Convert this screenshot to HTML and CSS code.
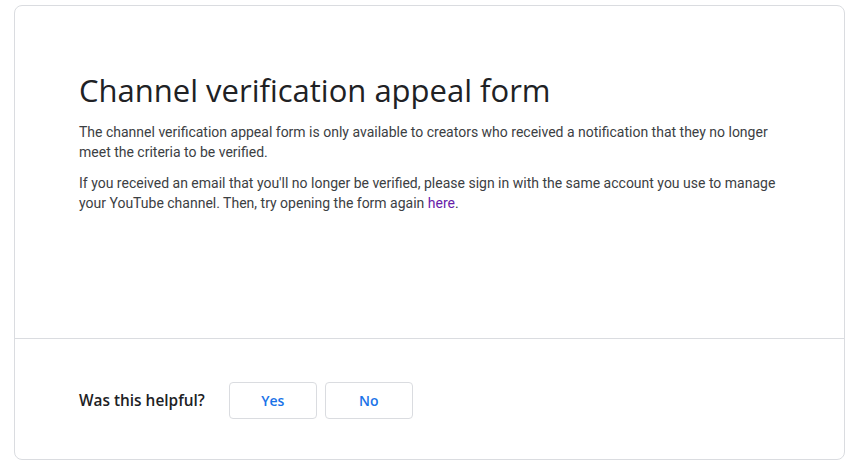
FILE: index.html
```html
<!DOCTYPE html>
<html lang="en">
<head>
<meta charset="utf-8">
<title>Channel verification appeal form</title>
<link rel="stylesheet" href="styles.css">
</head>
<body>
<div class="card">
  <section class="content">
    <h1 class="title">Channel verification appeal form</h1>
    <p class="text">The channel verification appeal form is only available to creators who received a notification that they no longer meet the criteria to be verified.</p>
    <p class="text">If you received an email that you'll no longer be verified, please sign in with the same account you use to manage your YouTube channel. Then, try opening the form again <a class="link" href="#">here</a>.</p>
  </section>
  <section class="feedback">
    <span class="question">Was this helpful?</span>
    <div class="buttons">
      <button class="btn">Yes</button>
      <button class="btn">No</button>
    </div>
  </section>
</div>
</body>
</html>
```
FILE: styles.css
```css
html, body {
  margin: 0;
  padding: 0;
  background: #fff;
}
body {
  padding: 5px 14px 0 14px;
}
.card {
  width: 831px;
  height: 455px;
  box-sizing: border-box;
  border: 1px solid #dadce0;
  border-radius: 8px;
  display: flex;
  flex-direction: column;
}
.content {
  height: 333px;
  box-sizing: border-box;
  padding: 64px 64px 0 64px;
  border-bottom: 1px solid #dadce0;
}
.title {
  margin: 0 0 12px 0;
  font-family: "Open Sans", sans-serif;
  font-weight: 400;
  font-size: 31px;
  line-height: 40px;
  color: #202124;
}
.text {
  margin: 0 0 11px 0;
  font-family: Roboto, sans-serif;
  font-size: 14px;
  line-height: 20px;
  color: #3c4043;
  max-width: 700px;
}
.link {
  color: #681da8;
  text-decoration: none;
}
.feedback {
  flex: 1;
  display: flex;
  align-items: center;
  gap: 24px;
  padding: 3px 64px 0 64px;
}
.question {
  font-family: "Open Sans", sans-serif;
  font-weight: 600;
  font-size: 15.4px;
  color: #202124;
}
.buttons {
  display: flex;
  gap: 8px;
}
.btn {
  width: 88px;
  height: 37px;
  background: #fff;
  border: 1px solid #dadce0;
  border-radius: 4px;
  font-family: "Open Sans", sans-serif;
  font-weight: 600;
  font-size: 14px;
  color: #1a73e8;
  padding: 0;
}
```
